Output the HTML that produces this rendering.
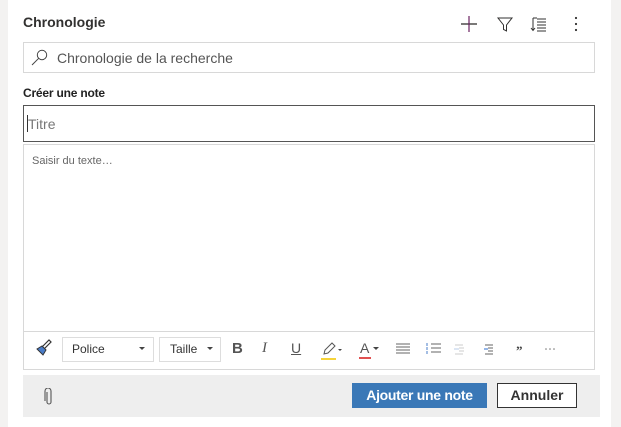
<!DOCTYPE html>
<html><head><style>
body{margin:0;width:621px;height:427px;background:#f3f2f1;font-family:"Liberation Sans",sans-serif;position:relative;overflow:hidden}
.card{position:absolute;left:8px;top:0;width:603px;height:427px;background:#fff}
.a{position:absolute}
</style></head><body>
<div class="card"></div>
<div class="a" style="left:23px;top:14px;font-size:14px;font-weight:bold;color:#323130">Chronologie</div>
<svg class="a" style="left:458px;top:14px" width="130" height="20">
<path d="M3 10h16" stroke="#323130" stroke-width="1.3"/>
<path d="M11 2v16" stroke="#6a2060" stroke-width="1.2"/>
<path d="M40 4h14l-5.5 7v6l-3-1.5v-4.5z" fill="none" stroke="#323130" stroke-width="1"/>
<path d="M75 4v12M73 14l2 2.5 2-2.5M79 5h9M79 8h9M79 11h9M79 14h9M79 17h9M75 4h4" stroke="#323130" stroke-width="1" fill="none"/>
<circle cx="118" cy="4" r="1.1" fill="#323130"/><circle cx="118" cy="10" r="1.1" fill="#323130"/><circle cx="118" cy="16" r="1.1" fill="#323130"/>
</svg>
<div class="a" style="left:23px;top:42px;width:570px;height:29px;border:1px solid #d8d8d8"></div>
<svg class="a" style="left:30px;top:49px" width="20" height="17"><circle cx="12" cy="6" r="4.7" fill="none" stroke="#444" stroke-width="1"/><path d="M8.7 9.3L2 16" stroke="#444" stroke-width="1"/></svg>
<div class="a" style="left:57px;top:50px;font-size:14px;color:#555">Chronologie de la recherche</div>
<div class="a" style="left:23px;top:86px;font-size:12px;font-weight:bold;color:#222;letter-spacing:-.2px">Créer une note</div>
<div class="a" style="left:23px;top:105px;width:570px;height:35px;border:1px solid #555"></div>
<div class="a" style="left:27px;top:115px;width:1px;height:17px;background:#333"></div>
<div class="a" style="left:28px;top:116px;font-size:14px;color:#777">Titre</div>
<div class="a" style="left:23px;top:144px;width:570px;height:224px;border:1px solid #d8d8d8"></div>
<div class="a" style="left:24px;top:331px;width:570px;height:1px;background:#d8d8d8"></div>
<div class="a" style="left:32px;top:155px;font-size:11px;color:#666">Saisir du texte…</div>
<svg class="a" style="left:34px;top:338px" width="20" height="20"><path d="M8 9l7-7 2 2-7 7z" fill="none" stroke="#333" stroke-width="1.2"/><path d="M3 11l5-3 4 4-3 5z" fill="#4a7cc8" stroke="#333" stroke-width="1"/></svg>
<div class="a" style="left:62px;top:337px;width:90px;height:23px;border:1px solid #ddd"></div>
<div class="a" style="left:72px;top:342px;font-size:12px;color:#333">Police</div>
<div class="a" style="left:139px;top:347px;border:3px solid transparent;border-top:3px solid #444"></div>
<div class="a" style="left:159px;top:337px;width:60px;height:23px;border:1px solid #ddd"></div>
<div class="a" style="left:170px;top:342px;font-size:12px;color:#333">Taille</div>
<div class="a" style="left:207px;top:347px;border:3px solid transparent;border-top:3px solid #444"></div>
<div class="a" style="left:232px;top:340px;font-size:15px;font-weight:bold;color:#555">B</div>
<div class="a" style="left:262px;top:340px;font-size:15px;font-style:italic;color:#555;font-family:'Liberation Serif',serif">I</div>
<div class="a" style="left:291px;top:340px;font-size:14px;text-decoration:underline;color:#555">U</div>
<svg class="a" style="left:320px;top:340px" width="26" height="22"><path d="M4 14l1-4 7-7 3 3-7 7z" fill="none" stroke="#555" stroke-width="1"/><rect x="1" y="18" width="15" height="2" fill="#f5d33a"/><path d="M18 9l2 2 2-2" fill="#444"/></svg>
<div class="a" style="left:360px;top:340px;font-size:14px;color:#555">A</div>
<div class="a" style="left:359px;top:357px;width:12px;height:2px;background:#e05050"></div>
<div class="a" style="left:373px;top:347px;border:3px solid transparent;border-top:3px solid #444"></div>
<svg class="a" style="left:395px;top:342px" width="170" height="14"><g stroke="#666" stroke-width="1"><path d="M1 2h14M1 5h14M1 8h14M1 11h14"/><path d="M36 2h10M36 6h10M36 10h10"/><path d="M32 1v3M32 5v3M32 9v3" stroke="#4a7cc8"/><path d="M60 3h8M64 6h5M64 9h5M60 12h8" stroke="#ccc"/><path d="M59 7h5" stroke="#b8cde8"/><path d="M90 3h8M93 6h5M93 9h5M90 12h8"/><path d="M89 7h4" stroke="#2b6cd0"/></g>
<text x="121" y="13" font-size="13" font-weight="bold" fill="#444" font-family="Liberation Serif">”</text>
<circle cx="151" cy="7" r=".8" fill="#777"/><circle cx="155" cy="7" r=".8" fill="#777"/><circle cx="159" cy="7" r=".8" fill="#777"/></svg>
<div class="a" style="left:23px;top:375px;width:577px;height:42px;background:#eee"></div>
<svg class="a" style="left:44px;top:388px" width="10" height="18"><path d="M3 4v10a2 2 0 0 0 4 0V3a3 3 0 0 0-6 0v10" fill="none" stroke="#555" stroke-width="1.1"/></svg>
<div class="a" style="left:352px;top:383px;width:135px;height:25px;background:#3a78b7;color:#fff;font-size:14px;font-weight:bold;text-align:center;line-height:25px;letter-spacing:-.3px">Ajouter une note</div>
<div class="a" style="left:497px;top:383px;width:78px;height:23px;border:1px solid #333;background:#fff;color:#333;font-size:14px;font-weight:bold;text-align:center;line-height:23px">Annuler</div>
</body></html>
